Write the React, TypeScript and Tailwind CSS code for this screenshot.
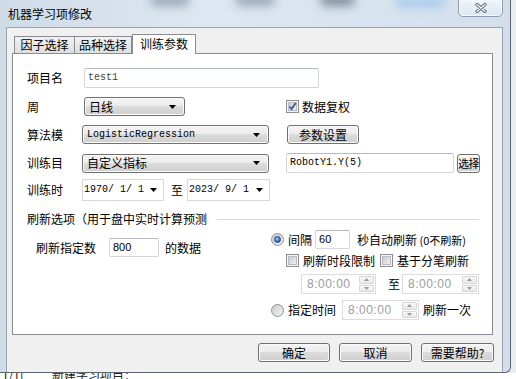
import React from 'react';

const cjk = "font-['Noto_Sans_CJK_SC','Microsoft_YaHei',sans-serif]";
const mono = "font-['Liberation_Mono','Noto_Sans_CJK_SC',monospace]";

const Arrow = () => (
    <svg width="7" height="4" viewBox="0 0 7 4" className="shrink-0"><path d="M0 0h7L3.5 4z" fill="#000" /></svg>
);

const Btn: React.FC<{ className?: string; children: React.ReactNode }> = ({ className = '', children }) => (
    <div className={`flex items-center justify-center whitespace-nowrap rounded-[3px] border border-[#707070] bg-[linear-gradient(#f4f4f4_0%,#ececec_45%,#dcdcdc_50%,#cfcfcf_100%)] shadow-[inset_0_0_0_1px_#fbfbfb] leading-none text-black ${className}`}>
        {children}
    </div>
);

const Combo: React.FC<{ className?: string; children: React.ReactNode; textClass?: string }> = ({ className = '', children, textClass = '' }) => (
    <div className={`flex items-center justify-between rounded-[3px] border border-[#707070] bg-[linear-gradient(#f4f4f4_0%,#ececec_45%,#dcdcdc_50%,#cfcfcf_100%)] shadow-[inset_0_0_0_1px_#fbfbfb] pl-[4px] pr-[8px] ${className}`}>
        <span className={`leading-none text-black ${textClass}`}>{children}</span>
        <Arrow />
    </div>
);

const TextBox: React.FC<{ className?: string; children?: React.ReactNode }> = ({ className = '', children }) => (
    <div className={`flex items-center rounded-[2px] border border-[#d3d6dc] border-t-[#b5b9c0] bg-white px-[3px] ${className}`}>{children}</div>
);

const DateBox: React.FC<{ value: string; className?: string }> = ({ value, className = '' }) => (
    <div className={`flex items-center justify-between border border-[#d8d8d8] bg-white pl-[1px] pr-[6px] ${className}`}>
        <span className={`${mono} text-[10px] leading-none text-black`}>{value}</span>
        <Arrow />
    </div>
);

const Check: React.FC<{ checked?: boolean }> = ({ checked }) => (
    <div className="flex h-[13px] w-[13px] shrink-0 items-center justify-center border border-[#8e8f8f] bg-[#f4f4f4]">
        <div className="relative h-[9px] w-[9px] border border-[#b9bcc2] bg-[linear-gradient(135deg,#c9ccd1,#eef0f2)]">
            {checked && (
                <svg width="9" height="9" viewBox="0 0 9 9" className="absolute left-[-1px] top-[-1px]">
                    <path d="M1.5 4.5 L3.6 7 L7.8 1" fill="none" stroke="#3f5a8a" strokeWidth="1.8" />
                </svg>
            )}
        </div>
    </div>
);

const Radio: React.FC<{ on?: boolean }> = ({ on }) => (
    <div className="flex h-[13px] w-[13px] shrink-0 items-center justify-center rounded-full border border-[#8e8f8f] bg-[linear-gradient(135deg,#c6c9ce,#f5f5f5)]">
        {on && <div className="h-[7px] w-[7px] rounded-full border border-[#1b3f74] bg-[radial-gradient(circle_at_40%_35%,#9fd2ff,#2f79c9_60%,#173f7a)]" />}
    </div>
);

const Spin: React.FC<{ className?: string }> = ({ className = '' }) => (
    <div className={`flex h-[20px] border border-[#dcdcdc] bg-white ${className}`}>
        <div className="flex flex-1 items-center pl-[5px] font-['Liberation_Sans',sans-serif] text-[12px] leading-none tracking-[0.5px] text-[#9c9c9c]">8:00:00</div>
        <div className="my-[1px] mr-[1px] flex w-[15px] flex-col gap-[1px]">
            <div className="flex flex-1 items-center justify-center rounded-[1px] border border-[#d6d6d6] bg-[linear-gradient(#f8f8f8,#e8e8e8)]">
                <svg width="5" height="3" viewBox="0 0 5 3"><path d="M0 3h5L2.5 0z" fill="#9a9a9a" /></svg>
            </div>
            <div className="flex flex-1 items-center justify-center rounded-[1px] border border-[#d6d6d6] bg-[linear-gradient(#f8f8f8,#e8e8e8)]">
                <svg width="5" height="3" viewBox="0 0 5 3"><path d="M0 0h5L2.5 3z" fill="#9a9a9a" /></svg>
            </div>
        </div>
    </div>
);

const Label: React.FC<{ w: string; children: React.ReactNode }> = ({ w, children }) => (
    <div className={`${w} shrink-0 text-[12px] leading-none text-black`}>{children}</div>
);

export default function App() {
    return (
        <div className={`${cjk} relative h-[379px] w-[516px] overflow-hidden bg-[#e9edf0]`}>
            {/* window */}
            <div className="relative flex h-[373px] w-[511px] flex-col overflow-hidden rounded-br-[6px] border-b border-r border-[#5c6570] bg-[linear-gradient(90deg,#cfdbe7,#dde7f1_40%,#d3e0ec)]">
                {/* title bar */}
                <div className="relative flex h-[27px] shrink-0 items-center pl-[8px]">
                    <div className="absolute left-[150px] top-[-6px] h-[12px] w-[40px] rounded-full bg-[#5b6c80] opacity-50 blur-[5px]" />
                    <div className="absolute left-[235px] top-[-6px] h-[12px] w-[40px] rounded-full bg-[#5b6c80] opacity-50 blur-[5px]" />
                    <div className="absolute left-[320px] top-[-6px] h-[12px] w-[35px] rounded-full bg-[#4a5666] opacity-60 blur-[5px]" />
                    <div className="absolute left-[395px] top-[-4px] h-[12px] w-[50px] rounded-full bg-[#9cc4ea] opacity-70 blur-[5px]" />
                    <span className="relative text-[12px] leading-none text-black">机器学习项修改</span>
                    <div className="absolute left-[458px] top-[-1px] flex h-[18px] w-[45px] items-center justify-center rounded-b-[5px] border border-[#8e9caf] bg-[linear-gradient(#eef4fa,#dde7f1)] shadow-[inset_0_0_0_1px_#f6f9fc]">
                        <svg width="12" height="10" viewBox="0 0 12 10">
                            <path d="M2 1.5 L10 8.5 M10 1.5 L2 8.5" stroke="#5a6472" strokeWidth="3.2" strokeLinecap="round" />
                            <path d="M2 1.5 L10 8.5 M10 1.5 L2 8.5" stroke="#fbfcfd" strokeWidth="1.4" strokeLinecap="round" />
                        </svg>
                    </div>
                </div>
                {/* body */}
                <div className="flex flex-1">
                    <div className="w-[6px] shrink-0" />
                    <div className="flex flex-1 flex-col border-l border-t border-r border-[#9aa4b0] bg-[#f0f0f0] pl-[5px] pr-[8px] pt-[6px]">
                        {/* tabs */}
                        <div className="flex h-[19px] items-end pl-[2px]">
                            <div className="flex h-[17px] w-[61px] items-center justify-center border border-b-0 border-[#898c95] bg-[linear-gradient(#f2f2f2,#dedede)] text-[12px] leading-none">因子选择</div>
                            <div className="flex h-[17px] w-[57px] items-center justify-center border border-b-0 border-l-0 border-[#898c95] bg-[linear-gradient(#f2f2f2,#dedede)] text-[12px] leading-none">品种选择</div>
                            <div className="relative z-10 -mb-px flex h-[20px] w-[64px] items-center justify-center border border-b-0 border-[#898c95] bg-white pb-[2px] text-[12px] leading-none">训练参数</div>
                        </div>
                        {/* page */}
                        <div className="flex h-[282px] w-[481px] flex-col border border-[#898c95] bg-white pl-[14px] pt-[14px]">
                            <div className="flex h-[20px] items-center">
                                <Label w="w-[57px]">项目名</Label>
                                <TextBox className="h-[20px] w-[235px]"><span className={`${mono} text-[10px] leading-none text-[#444]`}>test1</span></TextBox>
                            </div>
                            <div className="mt-[9px] flex h-[19px] items-center">
                                <Label w="w-[57px]">周</Label>
                                <Combo className="h-[19px] w-[101px]" textClass="text-[12px]">日线</Combo>
                                <div className="ml-[101px] flex items-center gap-[3px]">
                                    <Check checked />
                                    <span className="text-[12px] leading-none">数据复权</span>
                                </div>
                            </div>
                            <div className="mt-[9px] flex h-[19px] items-center">
                                <Label w="w-[55px]">算法模</Label>
                                <Combo className="h-[19px] w-[187px]" textClass={`${mono} text-[10px]`}>LogisticRegression</Combo>
                                <Btn className="ml-[18px] h-[19px] w-[72px] text-[12px]">参数设置</Btn>
                            </div>
                            <div className="mt-[9px] flex h-[20px] items-center">
                                <Label w="w-[55px]">训练目</Label>
                                <Combo className="h-[19px] w-[187px]" textClass="text-[12px]">自定义指标</Combo>
                                <TextBox className="ml-[17px] h-[20px] w-[168px]"><span className={`${mono} text-[10px] leading-none text-black`}>RobotY1.Y(5)</span></TextBox>
                                <Btn className="ml-[3px] h-[19px] w-[23px] text-[11px] tracking-[-0.5px]">选择</Btn>
                            </div>
                            <div className="mt-[6px] flex h-[22px] items-center">
                                <Label w="w-[55px]">训练时</Label>
                                <DateBox value="1970/ 1/ 1" className="h-[22px] w-[82px]" />
                                <span className="ml-[7px] text-[12px] leading-none">至</span>
                                <DateBox value="2023/ 9/ 1" className="ml-[4px] h-[22px] w-[83px]" />
                            </div>
                            <div className="mt-[11px] flex h-[14px] items-center pr-[13px]">
                                <span className="text-[12px] leading-none">刷新选项（用于盘中实时计算预测</span>
                                <div className="ml-[10px] h-px flex-1 bg-[#d3d9de]" />
                            </div>
                            <div className="flex">
                                <div className="flex w-[244px] shrink-0 pl-[9px] pt-[12px]">
                                    <div className="flex h-[19px] items-center">
                                        <Label w="w-[73px]">刷新指定数</Label>
                                        <TextBox className="h-[19px] w-[50px]"><span className="font-['Liberation_Sans',sans-serif] text-[11px] leading-none">800</span></TextBox>
                                        <span className="ml-[6px] text-[12px] leading-none">的数据</span>
                                    </div>
                                </div>
                                <div className="flex flex-col pt-[4px]">
                                    <div className="flex h-[19px] items-center">
                                        <Radio on />
                                        <span className="ml-[4px] text-[12px] leading-none">间隔</span>
                                        <TextBox className="ml-[3px] h-[19px] w-[35px]"><span className="font-['Liberation_Sans',sans-serif] text-[11px] leading-none">60</span></TextBox>
                                        <span className="ml-[7px] text-[12px] leading-none">秒自动刷新<span className="text-[11px]"> (0不刷新)</span></span>
                                    </div>
                                    <div className="mt-[4px] flex h-[15px] items-center pl-[15px]">
                                        <Check />
                                        <span className="ml-[4px] text-[12px] leading-none">刷新时段限制</span>
                                        <div className="ml-[5px]"><Check /></div>
                                        <span className="ml-[4px] text-[12px] leading-none">基于分笔刷新</span>
                                    </div>
                                    <div className="mt-[6px] flex h-[20px] items-center pl-[30px]">
                                        <Spin className="w-[75px]" />
                                        <span className="ml-[12px] text-[12px] leading-none">至</span>
                                        <Spin className="ml-[2px] w-[77px]" />
                                    </div>
                                    <div className="mt-[6px] flex h-[20px] items-center">
                                        <Radio />
                                        <span className="ml-[4px] text-[12px] leading-none">指定时间</span>
                                        <Spin className="ml-[6px] w-[77px]" />
                                        <span className="ml-[4px] text-[12px] leading-none">刷新一次</span>
                                    </div>
                                </div>
                            </div>
                        </div>
                        {/* buttons */}
                        <div className="mt-[8px] flex justify-end gap-[9px]">
                            <Btn className="h-[19px] w-[72px] text-[12px]">确定</Btn>
                            <Btn className="h-[19px] w-[73px] text-[12px]">取消</Btn>
                            <Btn className="h-[19px] w-[73px] text-[12px]">需要帮助?</Btn>
                        </div>
                    </div>
                    <div className="w-[7px] shrink-0" />
                </div>
            </div>
            {/* desktop behind the window */}
            <div className="flex h-[6px] overflow-hidden bg-white pl-[2px] text-[12px] leading-[14px] text-[#222]">
                <span className="-mt-[5px]">1/1(</span>
                <span className="-mt-[5px] ml-[28px]">新建学习项目：</span>
            </div>
        </div>
    );
}
